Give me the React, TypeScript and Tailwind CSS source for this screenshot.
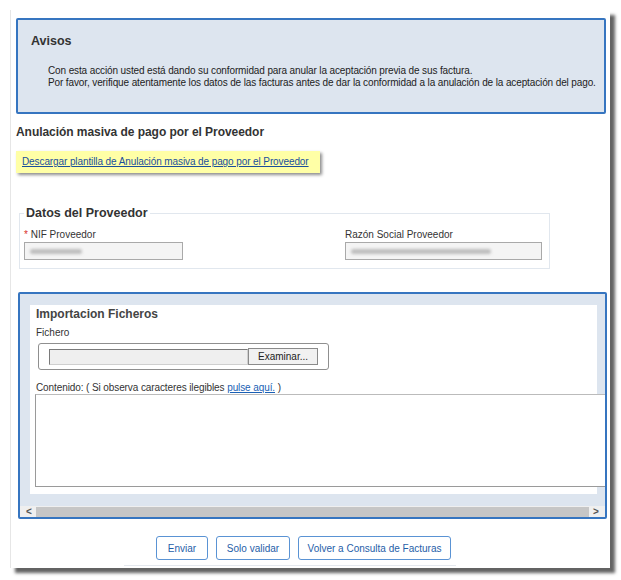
import React from "react";

const font = { fontFamily: '"Liberation Sans", Arial, sans-serif' };

function BlurText({ w }: { w: number }) {
  // blurred placeholder for masked data
  return (
    <div
      className="h-[5px] rounded-sm bg-[#bdbdbd] blur-[1.5px]"
      style={{ width: w }}
    />
  );
}

export default function App() {
  return (
    <div className="relative h-[580px] w-[621px] bg-white text-[#333]" style={font}>
      <div className="ml-[10px] pt-[10px]">
        <div className="h-[558px] w-[600px] border-l border-[#e6e6e6] bg-white pl-[5px] pt-[8px] shadow-[5px_5px_3px_rgba(60,60,60,0.8)]">
          {/* Avisos */}
          <div className="h-[96px] w-[590px] rounded-[2px] border-2 border-[#3675c0] bg-[#dde5ef] pl-[13px] pt-[14px]">
            <h3 className="text-[12.5px] font-bold leading-[14px] text-[#333]">Avisos</h3>
            <div className="ml-[17px] mt-[17px] text-[10px] leading-[12px] tracking-[-0.12px] text-[#222]">
              <p>Con esta acción usted está dando su conformidad para anular la aceptación previa de sus factura.</p>
              <p>Por favor, verifique atentamente los datos de las facturas antes de dar la conformidad a la anulación de la aceptación del pago.</p>
            </div>
          </div>

          {/* Titulo */}
          <h2 className="mt-[11px] text-[12px] font-bold leading-[15px] tracking-[-0.05px] text-[#333]">
            Anulación masiva de pago por el Proveedor
          </h2>

          {/* Descarga */}
          <div className="mt-[11px] flex h-[22px] w-[304px] items-center bg-[#ffffa6] pl-[6px] shadow-[2px_2px_3px_rgba(0,0,0,0.45)]">
            <a href="#" className="text-[10px] leading-[12px] tracking-[-0.1px] text-[#1a4f9c] underline">
              Descargar plantilla de Anulación masiva de pago por el Proveedor
            </a>
          </div>

          {/* Datos del Proveedor */}
          <fieldset className="ml-[3px] mt-[33px] h-[63px] w-[531px] border border-[#e1e7ee] px-[4px] pt-0">
            <legend className="px-[2px] text-[12.5px] font-bold leading-[14px] text-[#333]">Datos del Proveedor</legend>
            <div className="mt-[9px] flex">
              <div className="w-[321px]">
                <label className="block text-[10px] leading-[12px] text-[#333]">
                  <span className="text-[#d9302a]">*</span> NIF Proveedor
                </label>
                <div className="mt-[1px] flex h-[18px] w-[159px] items-center border border-[#a9a9a9] bg-[#f4f4f4] pl-[5px]">
                  <BlurText w={52} />
                </div>
              </div>
              <div>
                <label className="block text-[10px] leading-[12px] text-[#333]">Razón Social Proveedor</label>
                <div className="mt-[1px] flex h-[18px] w-[197px] items-center border border-[#a9a9a9] bg-[#f4f4f4] pl-[5px]">
                  <BlurText w={140} />
                </div>
              </div>
            </div>
          </fieldset>

          {/* Importacion Ficheros */}
          <div className="ml-[2px] mt-[23px] h-[227px] w-[589px] overflow-hidden rounded-[2px] border-2 border-[#3675c0] bg-[#dde5ef] pt-[11px]">
            <div className="ml-[10px] h-[189px] w-[567px] bg-white">
              <div className="pl-[6px] pt-[2px]">
                <h3 className="text-[12px] font-bold leading-[14px] text-[#444]">Importacion Ficheros</h3>
                <p className="mt-[6px] text-[10px] leading-[12px] text-[#333]">Fichero</p>
                <div className="ml-[2px] mt-[4px] flex h-[27px] w-[291px] items-center rounded-[3px] border border-[#8f8f8f] pl-[10px]">
                  <div className="h-[16px] w-[199px] border border-[#7a7a7a] border-r-[#cfcfcf] border-b-[#cfcfcf] bg-[#efefef]" />
                  <button className="h-[17px] w-[70px] border border-[#8a8a8a] bg-[#f1f1f1] text-[10px] leading-[12px] text-[#222]">
                    Examinar...
                  </button>
                </div>
                <p className="mt-[12px] text-[10px] leading-[12px] tracking-[-0.1px] text-[#333]">
                  Contenido: ( Si observa caracteres ilegibles{" "}
                  <a href="#" className="text-[#1a5fb4] underline">pulse aquí.</a> )
                </p>
              </div>
              <div className="ml-[5px] h-[93px] w-[600px] border border-[#9a9a9a] border-t-[#bbbbbb] bg-white" />
            </div>
            {/* scrollbar */}
            <div className="mt-[12px] flex h-[12px] items-center bg-[#efefef] px-[2px]">
              <span className="w-[14px] text-center text-[10px] font-bold leading-[10px] text-[#555]">&lt;</span>
              <div className="h-[10px] flex-1 bg-[#c6c6c6]" />
              <span className="w-[14px] text-center text-[10px] font-bold leading-[10px] text-[#555]">&gt;</span>
            </div>
          </div>

          {/* Botones */}
          <div className="ml-[140px] mt-[17px] flex gap-[8px]">
            <button className="h-[24px] w-[52px] rounded-[3px] border border-[#5a93d4] bg-white text-[10px] text-[#1f5ea8]">Enviar</button>
            <button className="h-[24px] w-[74px] rounded-[3px] border border-[#5a93d4] bg-white text-[10px] text-[#1f5ea8]">Solo validar</button>
            <button className="h-[24px] w-[153px] rounded-[3px] border border-[#5a93d4] bg-white text-[10px] text-[#1f5ea8]">Volver a Consulta de Facturas</button>
          </div>
          <div className="ml-[108px] mt-[5px] h-px w-[332px] bg-[#e4e8ee]" />
        </div>
      </div>
    </div>
  );
}
